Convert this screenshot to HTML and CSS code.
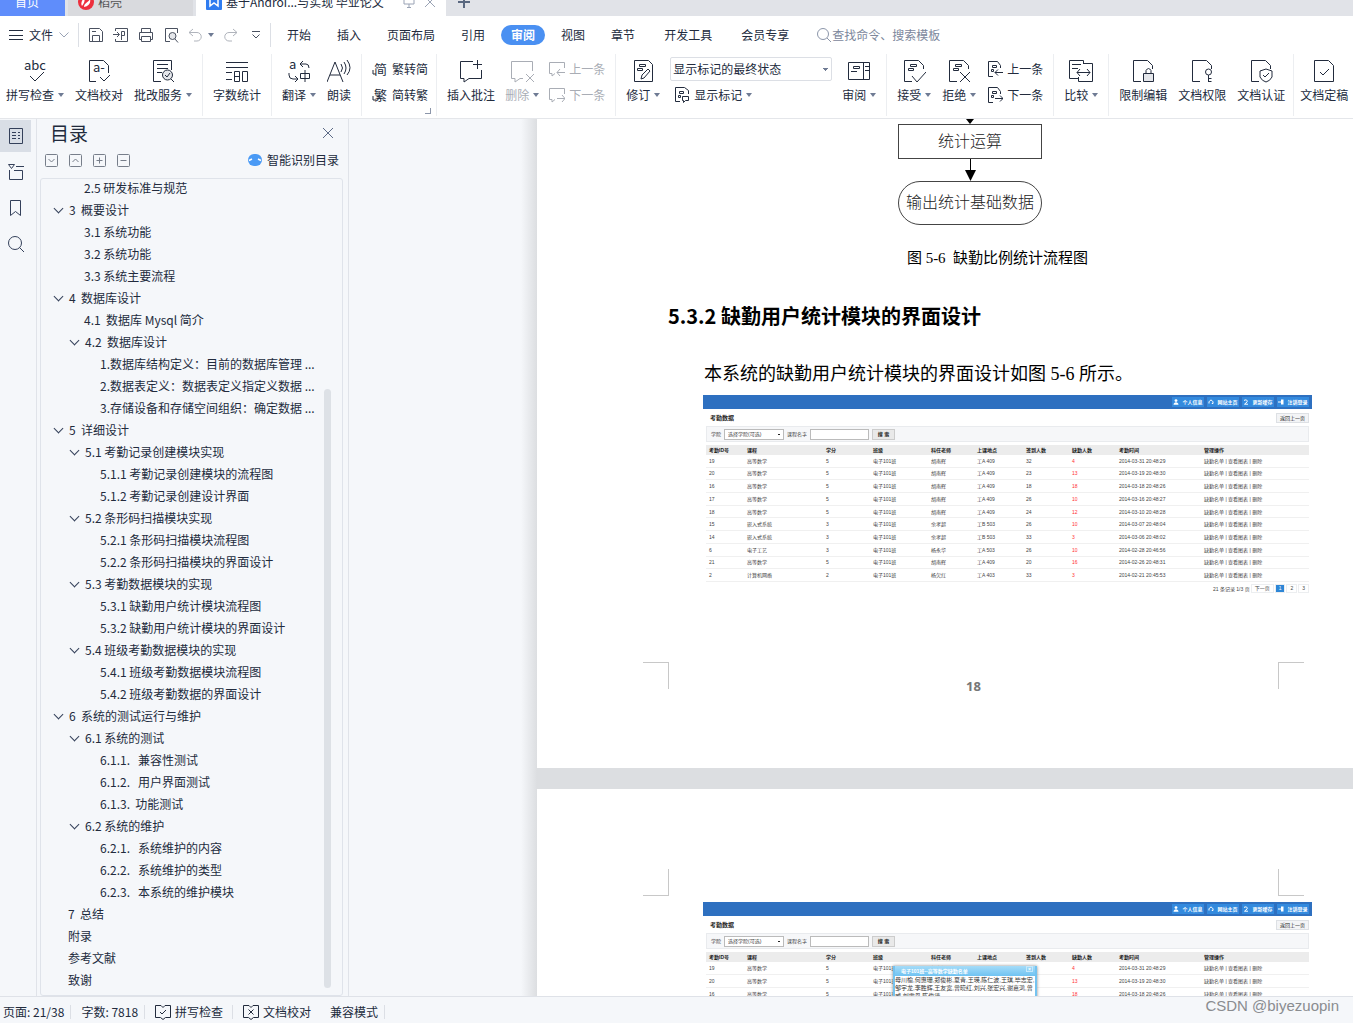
FILE: index.html
```html
<!DOCTYPE html>
<html lang="zh-CN">
<head>
<meta charset="utf-8">
<title>基于Android毕业论文</title>
<link rel="stylesheet" href="styles.css">
</head>
<body>
<svg class="sprite" aria-hidden="true">
  <symbol id="i-caret" viewBox="0 0 6 4"><path d="M0 0h6L3 4z" fill="#6f7b94" stroke="none"/></symbol>
  <symbol id="i-page" viewBox="0 0 24 24"><path d="M10 22.500H2.500v-21h14l5 5V10"/></symbol>
  <symbol id="i-marks" viewBox="0 0 24 24"><path d="M8.500 5.500h6v2h-6zM6.500 9.500h5v2h-5z"/></symbol>
  <symbol id="i-user" viewBox="0 0 6 6"><circle cx="3" cy="1.600" r="1.400" fill="#fff" stroke="none"/><path d="M.5 5.800c0-3.500 5-3.500 5 0z" fill="#fff" stroke="none"/></symbol>
  <symbol id="i-home" viewBox="0 0 6 6"><path d="M1 4.500V2.800L3 .8l2 2v1.700H3.800" stroke="#fff"/></symbol>
  <symbol id="i-sync" viewBox="0 0 6 6"><path d="M1 1.500c2-1.500 4 0 3 1.500L1.500 5.200H5" stroke="#fff"/></symbol>
  <symbol id="i-exit" viewBox="0 0 6 6"><path d="M3 .5h2.500v5H3z" fill="#fff" stroke="none"/><path d="M0 3h3" stroke="#fff"/></symbol>
</svg>

<header class="tabs">
  <button class="tab home">首页</button>
  <button class="tab docer"><svg width="16" height="16" viewBox="0 0 16 16"><circle cx="8" cy="8" r="8" fill="#ed2f3d" stroke="none"/><path d="M4 12c-2-4 1-6 2-9 1 3 1 5-2 9zM6 13c0-4 4-4 6-8 1 4-1 7-6 8z" fill="#fff" stroke="none"/></svg>稻壳</button>
  <button class="tab current"><svg width="16" height="16" viewBox="0 0 16 16"><rect width="16" height="16" rx="1" fill="#2f7cf0" stroke="none"/><path d="M4 3v9l4-3 4 3V3" stroke="#fff" stroke-width="1.500"/></svg><span class="tab-name">基于Androi...与实现 毕业论文</span><svg class="faint" width="12" height="12" viewBox="0 0 12 12"><path d="M1 1h10v7H1zM6 8v3M4 11.500h4"/></svg><svg class="faint" width="10" height="10" viewBox="0 0 10 10"><path d="M0 0l10 10M10 0 0 10"/></svg></button>
  <button class="tab plus" aria-label="新建"><svg width="12" height="12" viewBox="0 0 12 12"><path d="M6 0v12M0 6h12" stroke-width="2"/></svg></button>
</header>

<nav class="menu">
  <button class="file"><svg width="14" height="10" viewBox="0 0 14 10"><path d="M0 .5h14M0 5.500h14M0 9.500h14"/></svg>文件<svg class="faint" width="10" height="6" viewBox="0 0 10 6"><path d="M.5.5 5 5 9.500.5"/></svg></button>
  <div class="quick">
    <button aria-label="保存"><svg width="16" height="16" viewBox="0 0 16 16"><path d="M1.500 1.500h10l3 3v10h-13zM4.500 14.500v-6h7v6M4 4.500h4"/></svg></button>
    <button aria-label="导出PDF"><svg width="16" height="16" viewBox="0 0 16 16"><path d="M2.500 4V1.500h12v13h-12V12M0 7.500h6M4 5l2.500 2.500L4 10M8.500 13V4.500h3v4h-3"/></svg></button>
    <button aria-label="打印"><svg width="16" height="16" viewBox="0 0 16 16"><path d="M3.500 5.500v-4h9v4M3.500 12.500h-2v-7h13v7h-2M3.500 9.500h9v5h-9z"/></svg></button>
    <button aria-label="打印预览"><svg width="16" height="16" viewBox="0 0 16 16"><path d="M7 14.500H2.500v-13h12V6"/><circle cx="9.500" cy="9" r="3.500" fill="#e5e7eb"/><path d="m12 12 3 3.500"/></svg></button>
    <button class="pair faint" aria-label="撤销"><svg width="14" height="14" viewBox="0 0 14 14"><path d="M5 1 1 4.500 5 8M1 4.500h8a4 4 0 0 1 0 8.500H6"/></svg><svg width="6" height="4"><use href="#i-caret"/></svg></button>
    <button class="faint" aria-label="恢复"><svg width="14" height="14" viewBox="0 0 14 14"><path d="m9 1 4 3.500L9 8M13 4.500H5A4 4 0 0 0 5 13h3"/></svg></button>
    <button aria-label="更多"><svg width="8" height="8" viewBox="0 0 8 8"><path d="M0 .5h8M.5 3.500 4 7l3.500-3.500"/></svg></button>
  </div>
  <div class="menu-items">
    <button>开始</button><button>插入</button><button>页面布局</button><button>引用</button><button class="on">审阅</button><button>视图</button><button>章节</button><button>开发工具</button><button>会员专享</button>
  </div>
  <label class="find"><svg width="16" height="16" viewBox="0 0 16 16"><circle cx="7" cy="7" r="5.500"/><path d="m11 11 4 4"/></svg><input type="text" placeholder="查找命令、搜索模板"></label>
</nav>

<section class="ribbon">
  <div class="group first">
    <button class="big"><svg width="24" height="24" viewBox="0 0 24 24"><text x="1" y="11">abc</text><path d="m7 17 5 5 9-9"/></svg><span>拼写检查<svg width="6" height="4"><use href="#i-caret"/></svg></span></button>
    <button class="big"><svg width="24" height="24" viewBox="0 0 24 24"><path d="M9 22.500H2.500v-21h14l5 5V14M13 18l4 4 6-6"/><text x="6" y="13">a-</text></svg><span>文档校对</span></button>
    <button class="big"><svg width="24" height="24" viewBox="0 0 24 24"><path d="M10 22.500H2.500v-21h18V11M6 5.500h11M6 9.500h11M6 13.500h5"/><circle cx="16.500" cy="16" r="5" fill="#e5e7eb"/><path d="m14 16 2 2 3-4M20 20l3 3"/></svg><span>批改服务<svg width="6" height="4"><use href="#i-caret"/></svg></span></button>
  </div>
  <div class="group">
    <button class="big"><svg width="24" height="24" viewBox="0 0 24 24"><path d="M1 3.500h22M1 8.500h22M1 13.500h6M1 20.500h6M9.500 12.500h5v10h-5zM9.500 17.500h5M17.500 12.500h5v10h-5z"/></svg><span>字数统计</span></button>
  </div>
  <div class="group">
    <button class="big"><svg width="24" height="24" viewBox="0 0 24 24"><text x="2" y="10">a</text><path d="m16 2-3 3 3 3M13 5h6q3 0 3 4M2 14v2q0 4 4 4h4M8 17l3 3-3 3M13.500 14.500h9v5h-9zM18 11v12"/></svg><span>翻译<svg width="6" height="4"><use href="#i-caret"/></svg></span></button>
    <button class="big"><svg width="24" height="24" viewBox="0 0 24 24"><path d="M0 23 8 3l8 20M3 16h10M14 5q3 4 0 8M17 3q4 6 0 12M20 1q6 8 0 15"/></svg><span>朗读</span></button>
  </div>
  <div class="group corner">
    <div class="stack">
      <button><svg width="16" height="16" viewBox="0 0 16 16"><text x="2" y="13" class="han">简</text><path d="M1 9v4h3"/></svg>繁转简</button>
      <button><svg width="16" height="16" viewBox="0 0 16 16"><text x="2" y="13" class="han">繁</text><path d="M1 9v4h3"/></svg>简转繁</button>
    </div>
  </div>
  <div class="group tight">
    <button class="big"><svg width="24" height="24" viewBox="0 0 24 24"><path d="M14 2.500H1.500v17H5V23l5-3.500h12.500V11M18.500 1v9M14 5.500h9"/></svg><span>插入批注</span></button>
    <button class="big off"><svg width="24" height="24" viewBox="0 0 24 24"><path d="M22.500 12V2.500h-21v17H5V23l5-3.500h3M16 15l8 8M24 15l-8 8"/></svg><span>删除<svg width="6" height="4"><use href="#i-caret"/></svg></span></button>
    <div class="stack off">
      <button><svg width="16" height="16" viewBox="0 0 16 16"><path d="M15.500 7V1.500H.5v11H3V15l3-2.500M16 11.500H8M11 8l-3 3.500 3 3.500"/></svg>上一条</button>
      <button><svg width="16" height="16" viewBox="0 0 16 16"><path d="M15.500 7V1.500H.5v11H3V15l3-2.500M8 11.500h8M13 8l3 3.500-3 3.500"/></svg>下一条</button>
    </div>
  </div>
  <div class="group tight">
    <button class="big"><svg width="24" height="24" viewBox="0 0 24 24"><path d="M3.500 1.500h14l4 4v17h-18zM10 20l1-4 6-6 2 2-6 7z"/><use href="#i-marks"/></svg><span>修订<svg width="6" height="4"><use href="#i-caret"/></svg></span></button>
    <div class="stack wide">
      <select aria-label="标记状态"><option>显示标记的最终状态</option></select>
      <button><svg width="16" height="16" viewBox="0 0 16 16"><path d="M6 14.500H1.500v-14h9l4 3V7M5.500 4.500h4v2h-4zM4.500 8.500h2v2h-2zM8.500 9.500h6v4h-3l-2 2v-2h-1z"/></svg>显示标记<svg width="6" height="4"><use href="#i-caret"/></svg></button>
    </div>
    <button class="big"><svg width="24" height="24" viewBox="0 0 24 24"><path d="M1.500 3.500h21v17h-21zM16.500 3.500v17M18 7.500h4M18 11.500h4M6.500 7.500h6v2h-6zM4 12.500h6"/></svg><span>审阅<svg width="6" height="4"><use href="#i-caret"/></svg></span></button>
  </div>
  <div class="group">
    <button class="big"><svg width="24" height="24" viewBox="0 0 24 24"><use href="#i-page"/><use href="#i-marks"/><path d="m10 17 5 6 9-10"/></svg><span>接受<svg width="6" height="4"><use href="#i-caret"/></svg></span></button>
    <button class="big"><svg width="24" height="24" viewBox="0 0 24 24"><use href="#i-page"/><use href="#i-marks"/><path d="m13 13 10 10M23 13 13 23"/></svg><span>拒绝<svg width="6" height="4"><use href="#i-caret"/></svg></span></button>
    <div class="stack">
      <button><svg width="16" height="16" viewBox="0 0 16 16"><path d="M6 15.500H1.500V.5h9l3 4V7M5.500 4.500h4v2h-4zM4.500 8.500h2v2h-2zM16 11.500H8M11 8.500l-3 3 3 3"/></svg>上一条</button>
      <button><svg width="16" height="16" viewBox="0 0 16 16"><path d="M6 15.500H1.500V.5h9l3 4V7M5.500 4.500h4v2h-4zM4.500 8.500h2v2h-2zM8 11.500h8M13 8.500l3 3-3 3"/></svg>下一条</button>
    </div>
  </div>
  <div class="group">
    <button class="big"><svg width="24" height="24" viewBox="0 0 24 24"><path d="M14.500 5V1.500H.5v18H9M3 5.500h9M3 9.500h6M14 4.500h9.500v18h-14V18M8 13.500h13M11 10l-3 3.500 3 3.500M18 10l3 3.500-3 3.500"/></svg><span>比较<svg width="6" height="4"><use href="#i-caret"/></svg></span></button>
  </div>
  <div class="group secure">
    <button class="big"><svg width="24" height="24" viewBox="0 0 24 24"><use href="#i-page"/><path d="M12.500 14.500h10v8h-10z" fill="#e5e7eb"/><path d="M15 14.500v-3q2.500-4 5 0v3"/></svg><span>限制编辑</span></button>
    <button class="big"><svg width="24" height="24" viewBox="0 0 24 24"><use href="#i-page"/><circle cx="18.500" cy="13" r="3"/><path d="M18.500 16v7M18.500 19.500h3M18.500 22.500h3"/></svg><span>文档权限</span></button>
    <button class="big"><svg width="24" height="24" viewBox="0 0 24 24"><use href="#i-page"/><path d="m17 10 6 2v6q-2 4-6 5-4-1-6-5v-6zM14 16l2 2 4-4"/></svg><span>文档认证</span></button>
  </div>
  <div class="group last">
    <button class="big"><svg width="24" height="24" viewBox="0 0 24 24"><path d="M2.500 1.500h14l5 5v16h-19zM8 13l3 3 6-6"/></svg><span>文档定稿</span></button>
  </div>
</section>

<main class="work">
  <nav class="rail">
    <button class="on" aria-label="目录"><svg width="16" height="16" viewBox="0 0 16 16"><path d="M1.500.5h13v15h-13zM4 4.500h4M4 7.500h4M4 10.500h4M10 4.500h2M10 7.500h2M10 10.500h2"/></svg></button>
    <button aria-label="章节"><svg width="16" height="16" viewBox="0 0 16 16"><path d="M.5.5h6l-3 4zM8 2.500h8M1.500 6v9.500h13v-9H6"/></svg></button>
    <button aria-label="书签"><svg width="16" height="16" viewBox="0 0 16 16"><path d="M2.500.5h10v15l-5-4-5 4z"/></svg></button>
    <button aria-label="查找"><svg width="16" height="16" viewBox="0 0 16 16"><circle cx="7" cy="7" r="6.500"/><path d="m11.500 11.500 4.500 4.500"/></svg></button>
  </nav>
  <aside class="panel">
    <div class="panel-head"><h2>目录</h2><button aria-label="关闭"><svg width="10" height="10" viewBox="0 0 10 10"><path d="m0 0 10 10M10 0 0 10"/></svg></button></div>
    <div class="panel-tools">
      <button aria-label="展开"><svg width="13" height="13" viewBox="0 0 13 13"><rect x=".5" y=".5" width="12" height="12" rx="1"/><path d="m3.500 5 3 3 3-3"/></svg></button>
      <button aria-label="收起"><svg width="13" height="13" viewBox="0 0 13 13"><rect x=".5" y=".5" width="12" height="12" rx="1"/><path d="m3.500 8 3-3 3 3"/></svg></button>
      <button aria-label="增加"><svg width="13" height="13" viewBox="0 0 13 13"><rect x=".5" y=".5" width="12" height="12" rx="1"/><path d="M3.500 6.500h6M6.500 3.500v6"/></svg></button>
      <button aria-label="减少"><svg width="13" height="13" viewBox="0 0 13 13"><rect x=".5" y=".5" width="12" height="12" rx="1"/><path d="M3.500 6.500h6"/></svg></button>
      <a class="smart" href="#"><svg width="14" height="12" viewBox="0 0 14 12"><rect y="0" width="14" height="12" rx="6" fill="#4a9af5" stroke="none"/><path d="M1 6.500 4 5M10 5l3 1.500" stroke="#fff" stroke-width="1.500"/></svg>智能识别目录</a>
    </div>
    <div class="outline">
      <ul>
        <li class="l2"><a href="#">2.5 研发标准与规范</a></li>
        <li class="l1 open"><a href="#">3&nbsp; 概要设计</a></li>
        <li class="l2"><a href="#">3.1 系统功能</a></li>
        <li class="l2"><a href="#">3.2 系统功能</a></li>
        <li class="l2"><a href="#">3.3 系统主要流程</a></li>
        <li class="l1 open"><a href="#">4&nbsp; 数据库设计</a></li>
        <li class="l2"><a href="#">4.1&nbsp; 数据库 Mysql 简介</a></li>
        <li class="l2 open"><a href="#">4.2&nbsp; 数据库设计</a></li>
        <li class="l3"><a href="#">1.数据库结构定义：目前的数据库管理 ...</a></li>
        <li class="l3"><a href="#">2.数据表定义：数据表定义指定义数据 ...</a></li>
        <li class="l3"><a href="#">3.存储设备和存储空间组织：确定数据 ...</a></li>
        <li class="l1 open"><a href="#">5&nbsp; 详细设计</a></li>
        <li class="l2 open"><a href="#">5.1 考勤记录创建模块实现</a></li>
        <li class="l3"><a href="#">5.1.1 考勤记录创建模块的流程图</a></li>
        <li class="l3"><a href="#">5.1.2 考勤记录创建设计界面</a></li>
        <li class="l2 open"><a href="#">5.2 条形码扫描模块实现</a></li>
        <li class="l3"><a href="#">5.2.1 条形码扫描模块流程图</a></li>
        <li class="l3"><a href="#">5.2.2 条形码扫描模块的界面设计</a></li>
        <li class="l2 open"><a href="#">5.3 考勤数据模块的实现</a></li>
        <li class="l3"><a href="#">5.3.1 缺勤用户统计模块流程图</a></li>
        <li class="l3"><a href="#">5.3.2 缺勤用户统计模块的界面设计</a></li>
        <li class="l2 open"><a href="#">5.4 班级考勤数据模块的实现</a></li>
        <li class="l3"><a href="#">5.4.1 班级考勤数据模块流程图</a></li>
        <li class="l3"><a href="#">5.4.2 班级考勤数据的界面设计</a></li>
        <li class="l1 open"><a href="#">6&nbsp; 系统的测试运行与维护</a></li>
        <li class="l2 open"><a href="#">6.1 系统的测试</a></li>
        <li class="l3"><a href="#">6.1.1.&nbsp;&nbsp; 兼容性测试</a></li>
        <li class="l3"><a href="#">6.1.2.&nbsp;&nbsp; 用户界面测试</a></li>
        <li class="l3"><a href="#">6.1.3.&nbsp; 功能测试</a></li>
        <li class="l2 open"><a href="#">6.2 系统的维护</a></li>
        <li class="l3"><a href="#">6.2.1.&nbsp;&nbsp; 系统维护的内容</a></li>
        <li class="l3"><a href="#">6.2.2.&nbsp;&nbsp; 系统维护的类型</a></li>
        <li class="l3"><a href="#">6.2.3.&nbsp;&nbsp; 本系统的维护模块</a></li>
        <li class="l1"><a href="#">7&nbsp; 总结</a></li>
        <li class="l1"><a href="#">附录</a></li>
        <li class="l1"><a href="#">参考文献</a></li>
        <li class="l1"><a href="#">致谢</a></li>
      </ul>
      <div class="thumb"></div>
    </div>
  </aside>

  <div class="canvas">
    <article class="sheet upper">
      <div class="flow">
        <svg width="12" height="5" viewBox="0 0 12 5"><path d="M2 0h8L6 5z" fill="#000" stroke="none"/></svg>
        <div class="step">统计运算</div>
        <svg width="12" height="22" viewBox="0 0 12 22"><path d="M6.500 0v12" stroke="#000"/><path d="M1 11h11L6.500 22z" fill="#000" stroke="none"/></svg>
        <div class="step end">输出统计基础数据</div>
      </div>
      <p class="caption">图 5-6&nbsp; 缺勤比例统计流程图</p>
      <h3>5.3.2 缺勤用户统计模块的界面设计</h3>
      <p class="para">本系统的缺勤用户统计模块的界面设计如图 5-6 所示。</p>
      <div class="shot">
        <div class="shot-bar"><a href="#"><svg width="6" height="6"><use href="#i-user"/></svg>个人信息</a><a href="#"><svg width="6" height="6"><use href="#i-home"/></svg>网站主页</a><a href="#"><svg width="6" height="6"><use href="#i-sync"/></svg>更新缓存</a><a href="#"><svg width="6" height="6"><use href="#i-exit"/></svg>注销登录</a></div>
        <div class="shot-title"><b>考勤数据</b><button>返回上一页</button></div>
        <div class="shot-form"><label for="s1">学院</label><select id="s1"><option>选择学院(可选)</option></select><label for="n1">课程名字</label><input id="n1" type="text"><button>搜 索</button></div>
        <table>
          <colgroup><col class="c1"><col class="c2"><col class="c3"><col class="c4"><col class="c5"><col class="c6"><col class="c7"><col class="c8"><col class="c9"><col></colgroup>
          <thead><tr><th>考勤ID号</th><th>课程</th><th>学分</th><th>班级</th><th>科任老师</th><th>上课地点</th><th>签到人数</th><th>缺勤人数</th><th>考勤时间</th><th>管理操作</th></tr></thead>
          <tbody>
            <tr><td>19</td><td>高等数学</td><td>5</td><td>电子101班</td><td>胡南辉</td><td>工A 409</td><td>32</td><td>4</td><td>2014-03-31 20:48:29</td><td>缺勤名单 | 查看图表 | 删除</td></tr>
            <tr><td>20</td><td>高等数学</td><td>5</td><td>电子101班</td><td>胡南辉</td><td>工A 409</td><td>23</td><td>13</td><td>2014-03-19 20:48:30</td><td>缺勤名单 | 查看图表 | 删除</td></tr>
            <tr><td>16</td><td>高等数学</td><td>5</td><td>电子101班</td><td>胡南辉</td><td>工A 409</td><td>18</td><td>18</td><td>2014-03-18 20:48:26</td><td>缺勤名单 | 查看图表 | 删除</td></tr>
            <tr><td>17</td><td>高等数学</td><td>5</td><td>电子101班</td><td>胡南辉</td><td>工A 409</td><td>26</td><td>10</td><td>2014-03-16 20:48:27</td><td>缺勤名单 | 查看图表 | 删除</td></tr>
            <tr><td>18</td><td>高等数学</td><td>5</td><td>电子101班</td><td>胡南辉</td><td>工A 409</td><td>24</td><td>12</td><td>2014-03-10 20:48:28</td><td>缺勤名单 | 查看图表 | 删除</td></tr>
            <tr><td>15</td><td>嵌入式系统</td><td>3</td><td>电子101班</td><td>余孝超</td><td>工B 503</td><td>26</td><td>10</td><td>2014-03-07 20:48:04</td><td>缺勤名单 | 查看图表 | 删除</td></tr>
            <tr><td>14</td><td>嵌入式系统</td><td>3</td><td>电子101班</td><td>余孝超</td><td>工B 503</td><td>33</td><td>3</td><td>2014-03-06 20:48:02</td><td>缺勤名单 | 查看图表 | 删除</td></tr>
            <tr><td>6</td><td>电子工艺</td><td>3</td><td>电子101班</td><td>杨永华</td><td>工A 503</td><td>26</td><td>10</td><td>2014-02-28 20:46:56</td><td>缺勤名单 | 查看图表 | 删除</td></tr>
            <tr><td>21</td><td>高等数学</td><td>5</td><td>电子101班</td><td>胡南辉</td><td>工A 409</td><td>20</td><td>16</td><td>2014-02-26 20:48:31</td><td>缺勤名单 | 查看图表 | 删除</td></tr>
            <tr><td>2</td><td>计算机网络</td><td>2</td><td>电子101班</td><td>杨欠红</td><td>工A 403</td><td>33</td><td>3</td><td>2014-02-21 20:45:53</td><td>缺勤名单 | 查看图表 | 删除</td></tr>
          </tbody>
        </table>
        <div class="pager"><span>21 条记录 1/3 页</span><a href="#">下一页</a><a class="on" href="#">1</a><a href="#">2</a><a href="#">3</a></div>
      </div>
      <footer class="crop bottom"><i></i><span>18</span><i></i></footer>
    </article>

    <article class="sheet lower">
      <div class="crop top"><i></i><i></i></div>
      <div class="shot">
        <div class="shot-bar"><a href="#"><svg width="6" height="6"><use href="#i-user"/></svg>个人信息</a><a href="#"><svg width="6" height="6"><use href="#i-home"/></svg>网站主页</a><a href="#"><svg width="6" height="6"><use href="#i-sync"/></svg>更新缓存</a><a href="#"><svg width="6" height="6"><use href="#i-exit"/></svg>注销登录</a></div>
        <div class="shot-title"><b>考勤数据</b><button>返回上一页</button></div>
        <div class="shot-form"><label for="s2">学院</label><select id="s2"><option>选择学院(可选)</option></select><label for="n2">课程名字</label><input id="n2" type="text"><button>搜 索</button></div>
        <table>
          <colgroup><col class="c1"><col class="c2"><col class="c3"><col class="c4"><col class="c5"><col class="c6"><col class="c7"><col class="c8"><col class="c9"><col></colgroup>
          <thead><tr><th>考勤ID号</th><th>课程</th><th>学分</th><th>班级</th><th>科任老师</th><th>上课地点</th><th>签到人数</th><th>缺勤人数</th><th>考勤时间</th><th>管理操作</th></tr></thead>
          <tbody>
            <tr><td>19</td><td>高等数学</td><td>5</td><td>电子101班</td><td>胡南辉</td><td>工A 409</td><td>32</td><td>4</td><td>2014-03-31 20:48:29</td><td>缺勤名单 | 查看图表 | 删除</td></tr>
            <tr><td>20</td><td>高等数学</td><td>5</td><td>电子101班</td><td>胡南辉</td><td>工A 409</td><td>23</td><td>13</td><td>2014-03-19 20:48:30</td><td>缺勤名单 | 查看图表 | 删除</td></tr>
            <tr><td>16</td><td>高等数学</td><td>5</td><td>电子101班</td><td>胡南辉</td><td>工A 409</td><td>18</td><td>18</td><td>2014-03-18 20:48:26</td><td>缺勤名单 | 查看图表 | 删除</td></tr>
          </tbody>
        </table>
        <div class="dialog"><div class="dialog-head"><span>电子101班--高等数学缺勤名单</span><button aria-label="关闭">×</button></div><p>母川榆,何惠珊,郑俊彬,夏青,王瑛,陈仁波,王琪,毕志宏,邹宇龙,李胜辉,王友宽,曾晓红,刘兴,张宏兴,谢嘉鸿,曾威,刘零丹,陈俊德</p></div>
      </div>
    </article>
  </div>
</main>

<footer class="status">
  <span>页面: 21/38</span>
  <span>字数: 7818</span>
  <button><svg width="16" height="16" viewBox="0 0 16 16"><path d="M6 1.500H.5v12h5l2.500 2 2.500-2h5v-12H10l-2 2zM5 8l2 2 4-4"/></svg>拼写检查</button>
  <button class="open-end"><svg width="16" height="16" viewBox="0 0 16 16"><path d="M6 1.500H.5v12h5l2.500 2 2.500-2h5v-12H10l-2 2zM5.500 5.500l5 5M10.500 5.500l-5 5"/></svg>文档校对</button>
  <span>兼容模式</span>
  <b class="mark">CSDN @biyezuopin</b>
</footer>
</body>
</html>
```
FILE: styles.css
```css
* { box-sizing: border-box; }
body {
  margin: 0;
  height: 100vh;
  display: flex;
  flex-direction: column;
  overflow: hidden;
  background: #f5f7fa;
  color: #222b3d;
  font: 12px/16px "Noto Sans CJK SC", sans-serif;
}
button, input, select { font: inherit; color: inherit; border: 0; background: none; padding: 0; margin: 0; }
a { color: inherit; text-decoration: none; }
h2, h3, p, ul { margin: 0; padding: 0; font-weight: 400; }
svg { flex: none; fill: none; stroke: currentColor; }
.sprite { position: absolute; width: 0; height: 0; }
.faint { color: #9aa3b5; }

/* window tabs */
.tabs { flex: none; height: 16px; display: flex; align-items: flex-end; background: #e1e3e8; overflow: hidden; }
.tab { flex: none; display: flex; align-items: center; height: 28px; }
.tab.home { width: 65px; padding-left: 15px; background: #5f8dfb; color: #fff; }
.tab.docer { width: 125px; margin-left: 3px; padding-left: 10px; gap: 4px; background: #d9dade; color: #555; }
.tab.current { width: 250px; margin-left: 3px; padding: 0 11px 0 10px; gap: 4px; background: #fff; }
.tab-name { flex: 1; text-align: left; }
.tab.current .faint + .faint { margin-left: 6px; }
.tab.plus { padding-left: 12px; color: #5a6880; }

/* menu */
.menu { flex: none; height: 38px; display: flex; align-items: center; background: #fff; }
.menu button { display: flex; align-items: center; justify-content: center; }
.file { gap: 6px; padding: 0 9px; height: 24px; border-right: 1px solid #dcdfe5; }
.quick { display: flex; align-items: center; gap: 9px; padding: 0 6px 0 9px; height: 24px; border-right: 1px solid #dcdfe5; color: #4a5160; }
.quick button { min-width: 16px; height: 16px; }
.quick .pair { gap: 6px; }
.quick .faint { color: #b0b4bc; }
.menu-items { display: flex; gap: 6px; padding-left: 6px; }
.menu-items button { height: 20px; padding: 0 10px; border-radius: 10px; }
.menu-items button:nth-child(n+8) { margin-left: 3px; }
.menu-items .on { background: #4a90f2; color: #fff; font-weight: 700; }
.find { display: flex; align-items: center; margin-left: 17px; color: #8c96aa; }
.find input { width: 140px; outline: 0; }
.find input::placeholder { color: #7c879c; opacity: 1; }

/* ribbon */
.ribbon { flex: none; height: 64px; display: flex; background: #fff; overflow: hidden; }
.group { flex: none; display: flex; align-items: flex-start; gap: 11px; height: 62px; padding: 5px 10px 0; border-right: 1px solid #eceef1; }
.group.first { padding-left: 6px; }
.group.tight { gap: 10px; }
.group.secure { padding-right: 8px; }
.group.last { padding: 5px 0 0 6px; border: 0; }
.group.corner { position: relative; padding-right: 8px; }
.group.corner::after { content: ""; position: absolute; right: 5px; bottom: 2px; width: 5px; height: 5px; border: solid #8c96aa; border-width: 0 1px 1px 0; }
.big { display: flex; flex-direction: column; align-items: center; gap: 4px; }
.big > span { display: flex; align-items: center; gap: 4px; white-space: nowrap; }
.big text { font-size: 13px; fill: currentColor; stroke: none; }
.han { font-size: 13px; fill: currentColor; stroke: none; }
.stack { display: flex; flex-direction: column; gap: 10px; padding-top: 2px; }
.stack button { display: flex; align-items: center; gap: 4px; height: 16px; white-space: nowrap; }
.off { color: #a9adb5; }
.stack.wide { gap: 6px; padding-top: 0; align-items: flex-start; }
.stack.wide button { padding-left: 4px; }
.stack.wide select { width: 162px; height: 24px; margin-top: -2px; border: 1px solid #dcdfe5; border-radius: 2px; padding-left: 2px; appearance: none; background: linear-gradient(#6f7b94, #6f7b94) no-repeat 152px 10px / 5px 1px, linear-gradient(#6f7b94, #6f7b94) no-repeat 153px 11px / 3px 1px, linear-gradient(#6f7b94, #6f7b94) no-repeat 154px 12px / 1px 1px; }

/* side rail and outline */
.work { flex: 1; min-height: 0; display: flex; border-top: 1px solid #e4e6ea; border-bottom: 1px solid #dfe2e8; }
.rail { flex: none; width: 37px; display: flex; flex-direction: column; gap: 4px; padding-top: 1px; border-right: 1px solid #e0e3e9; color: #34405a; }
.rail button { width: 31px; height: 32px; display: grid; place-items: center; }
.rail .on { background: #d9dee6; }
.panel { flex: none; width: 312px; display: flex; flex-direction: column; border-right: 1px solid #e0e3e9; padding: 0 5px 0 3px; }
.panel-head { display: flex; justify-content: space-between; align-items: center; height: 28px; padding: 0 10px; color: #5c6a86; }
.panel-head h2 { font-size: 19px; line-height: 28px; color: #222b3d; }
.panel-tools { display: flex; align-items: center; gap: 11px; height: 26px; padding: 0 4px 0 5px; color: #777e8a; }
.panel-tools button { height: 13px; display: flex; }
.smart { margin-left: auto; display: flex; align-items: center; gap: 5px; color: #222b3d; }
.outline { position: relative; flex: 1; min-height: 0; margin-top: 5px; border: 1px solid #dfe3ea; border-radius: 3px; overflow: hidden; }
.outline ul { list-style: none; margin-top: -2px; }
.outline li { display: flex; align-items: center; height: 22px; white-space: nowrap; }
.outline li::before { content: ""; flex: none; width: 6px; height: 6px; margin: 0 7px 0 2px; }
.outline li.open::before { border: solid #34405a; border-width: 0 1px 1px 0; transform: translateY(-2px) rotate(45deg); }
.l1 { padding-left: 12px; }
.l2 { padding-left: 28px; }
.l3 { padding-left: 44px; }
.thumb { position: absolute; right: 11px; top: 210px; bottom: 7px; width: 7px; border-radius: 4px; background: #dde1e6; }

/* document */
.canvas { flex: 1; min-width: 0; overflow: hidden; padding-left: 188px; display: flex; flex-direction: column; gap: 21px; background: linear-gradient(90deg, #f5f7fa 172px, #dcdee1 188px); }
.sheet { flex: none; width: 873px; padding: 0 131px; background: #fff; color: #000; }
.flow { display: flex; flex-direction: column; align-items: center; width: 604px; }
.step { width: 144px; height: 35px; display: grid; place-items: center; padding-bottom: 4px; border: 1px solid #444; font-size: 16px; font-weight: 300; color: #222; }
.step.end { height: 44px; border-radius: 22px; }
.caption { margin-top: 23px; padding-left: 48px; text-align: center; font: 400 15px/20px "Liberation Serif", "Noto Sans CJK SC", serif; }
.sheet h3 { margin-top: 34px; font-size: 20px; line-height: 28px; font-weight: 700; white-space: nowrap; }
.para { margin-top: 32px; padding-left: 36px; font: 400 18px/24px "Liberation Serif", "Noto Sans CJK SC", serif; white-space: nowrap; }
.crop { display: flex; justify-content: space-between; margin: 0 -25px; height: 27px; }
.crop i { width: 26px; border: 0 solid #c8c8c8; }
.crop.bottom { margin-top: 69px; margin-bottom: 79px; }
.crop.bottom i { border-top-width: 1px; }
.crop.bottom i:first-child { border-right-width: 1px; }
.crop.bottom i:last-child { border-left-width: 1px; }
.crop.bottom span { align-self: flex-end; margin-bottom: -5px; font: 700 13px/16px "Noto Sans", sans-serif; color: #777; }
.crop.top { margin-top: 80px; margin-bottom: 6px; }
.crop.top i { border-bottom-width: 1px; }
.crop.top i:first-child { border-right-width: 1px; }
.crop.top i:last-child { border-left-width: 1px; }

/* attendance screenshots inside the thesis */
.shot { position: relative; width: 609px; margin: 9px 0 0 35px; font: 5px/8px "Liberation Sans", "Noto Sans CJK SC", sans-serif; color: #444; }
.lower .shot { margin-top: 0; }
.shot-bar { display: flex; justify-content: flex-end; align-items: center; gap: 3px; height: 14px; padding-right: 3px; background: #2e70c0; }
.shot-bar a { display: flex; align-items: center; justify-content: center; gap: 3px; width: 32px; height: 10px; background: #338ade; color: #fff; font-weight: 700; }
.shot-title { display: flex; align-items: center; justify-content: space-between; height: 17px; padding: 1px 3px 0 7px; }
.shot-title b { font-size: 6px; color: #222; }
.shot button { background: #f3f4f6; border: 1px solid #dde0e4; padding: 0 3px; height: 10px; line-height: 8px; color: #222; }
.shot-form { display: flex; align-items: center; gap: 3px; height: 16px; margin: 0 3px; padding-left: 4px; background: #f6f7f9; border: 1px solid #e9ebee; }
.shot-form select { appearance: none; width: 60px; height: 11px; padding-left: 3px; border: 1px solid #bbb; background: linear-gradient(#222, #222) no-repeat 53px 4px / 2px 1px #fff; }
.shot-form input { width: 59px; height: 11px; border: 1px solid #bbb; background: #fff; }
.shot-form button { width: 23px; height: 11px; font-weight: 700; background: #e9e9e9; border-color: #ccc; }
.shot table { width: 603px; margin: 3px 3px 0; table-layout: fixed; border-collapse: collapse; white-space: nowrap; }
.shot th { height: 10px; padding: 0 3px; text-align: left; background: #ececec; color: #222; }
.shot td { padding: 2px 3px; border-bottom: 1px solid #f0f0f0; }
.shot td:nth-child(8) { color: #f33; }
.upper table { height: 137px; }
.upper td { padding: 0 3px; }
.c1 { width: 38px; } .c2 { width: 79px; } .c3 { width: 47px; } .c4 { width: 58px; } .c5 { width: 46px; }
.c6 { width: 49px; } .c7 { width: 46px; } .c8 { width: 47px; } .c9 { width: 85px; }
.pager { display: flex; justify-content: flex-end; align-items: center; gap: 1px; height: 9px; margin: 2px 3px 0; }
.pager a { min-width: 10px; padding: 0 3px; text-align: center; border: 1px solid #eceef0; line-height: 7px; }
.pager .on { background: #2e86d6; color: #fff; }
.lower { height: 300px; }
.dialog { position: absolute; left: 190px; top: 64px; width: 144px; border: solid #74c3f0; border-width: 0 2px 2px; background: #fff; box-shadow: 0 0 3px #888; color: #333; }
.dialog-head { display: flex; justify-content: space-between; height: 10px; line-height: 10px; padding: 0 2px 0 6px; background: linear-gradient(#a5dcf8, #6fc3f2); color: #fff; font-weight: 700; }
.dialog-head button { height: 6px; line-height: 4px; padding: 0 1px; background: none; color: #fff; border-color: #c5e8fb; }
.dialog p { font-size: 6px; line-height: 8px; word-break: break-all; }

/* status bar */
.status { flex: none; height: 26px; display: flex; align-items: center; padding: 4px 0 0 3px; }
.status span, .status button { display: flex; align-items: center; gap: 4px; height: 14px; padding-right: 6px; margin-right: 10px; border-right: 1px solid #dcdfe5; white-space: nowrap; }
.status button { padding-right: 9px; }
.status .open-end { border: 0; }
.mark { margin: -12px 14px 0 auto; font: 400 15px/20px "Liberation Sans", sans-serif; color: #8a8c90; }
```
